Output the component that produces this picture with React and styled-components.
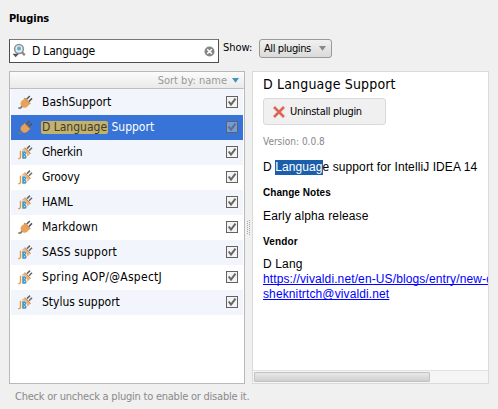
import React from "react";
import styled, { createGlobalStyle } from "styled-components";

const Global = createGlobalStyle`
  * { box-sizing: border-box; }
  body {
    margin: 0;
    background: #f0f0f0;
    color: #000;
    font-family: "DejaVu Sans Condensed", "DejaVu Sans", sans-serif;
    font-stretch: condensed;
    font-size: 12px;
    overflow: hidden;
  }
`;

const Window = styled.div`
  width: 498px;
  height: 409px;
  padding: 10px 9px 0;
  background: #f0f0f0;
`;

const Heading = styled.h1`
  margin: 0;
  height: 16px;
  font-size: 11px;
  line-height: 18px;
  font-weight: bold;
  letter-spacing: ${(p) => p.$track || 0}px;
`;

const Label = styled.span`
  white-space: pre;
  font-size: ${(p) => p.$size || 12}px;
  letter-spacing: ${(p) => p.$track || 0}px;
  color: ${(p) => p.$color || "inherit"};
`;

const Toolbar = styled.div`
  display: flex;
  height: 24px;
  margin-top: 13px;
`;

const SearchField = styled.div`
  display: flex;
  align-items: center;
  width: 210px;
  height: 24px;
  padding: 0 3px 0 2px;
  background: #fff;
  border: 1px solid #4e4e4e;
  border-top-color: #777;
`;

const SearchText = styled.div`
  flex: 1;
  margin-left: 5px;
  line-height: 22px;
`;

const ShowLabel = styled.div`
  width: 40px;
  margin-left: 4px;
  line-height: 17px;
`;

const Dropdown = styled.div`
  display: flex;
  align-items: center;
  justify-content: space-between;
  width: 73px;
  height: 19px;
  margin-left: -4px;
  padding: 0 5px 0 4px;
  border: 1px solid #999;
  border-radius: 3px;
  background: linear-gradient(#f1f1f1, #dadada);
`;

const Panels = styled.div`
  display: flex;
  height: 313px;
  margin-top: 8px;
`;

const PluginList = styled.div`
  width: 236px;
  height: 313px;
  background: #fff;
  border: 1px solid #b9b9b9;
`;

const SortHeader = styled.div`
  display: flex;
  align-items: center;
  justify-content: flex-end;
  gap: 5px;
  height: 17px;
  padding-right: 5px;
  border-bottom: 1px solid #bfbfbf;
  background: linear-gradient(#fbfbfb, #eaeaea);
`;

const Rows = styled.div`
  padding: 0 1px;
`;

const Row = styled.div`
  display: flex;
  height: ${(p) => (p.$first ? 26 : 25)}px;
  padding: ${(p) => (p.$first ? 6 : 5)}px 5px 0 7px;
  color: ${(p) => (p.$selected ? "#fff" : "#000")};
  background: ${(p) => (p.$selected ? "#3874d8" : p.$striped ? "#f2f5fb" : "#fff")};
`;

const RowName = styled.div`
  flex: 1;
  margin-left: 9px;
  line-height: 14px;
  height: 14px;
  white-space: pre;
  letter-spacing: ${(p) => p.$track || 0}px;
`;

const Match = styled.span`
  display: inline-block;
  height: 13px;
  line-height: 13px;
  margin-left: -1px;
  padding: 0 1px;
  border-radius: 2px;
  color: #3c3c30;
  background: #c3b16c;
`;

const Divider = styled.div`
  display: flex;
  align-items: center;
  justify-content: center;
  width: 7px;
`;

const Details = styled.div`
  display: flex;
  flex-direction: column;
  width: 237px;
  height: 313px;
  border: 1px solid #dadada;
  background: #fff;
`;

const DetailsBody = styled.div`
  flex: 1;
  padding: 0 0 0 10px;
  overflow: hidden;
`;

const Title = styled.h2`
  margin: 3px 0 0;
  height: 19px;
  line-height: 19px;
  font-size: 14px;
  font-weight: normal;
  white-space: pre;
  letter-spacing: ${(p) => p.$track || 0}px;
`;

const UninstallButton = styled.div`
  display: flex;
  align-items: center;
  gap: 5px;
  width: 123px;
  height: 27px;
  margin-top: 4px;
  padding: 0 0 0 9px;
  border: 1px solid #d9d9d9;
  border-radius: 3px;
  background: #f0f0f0;
`;

const Line = styled.div`
  height: 15px;
  margin-top: ${(p) => p.$gap || 0}px;
  line-height: 15px;
  font-family: ${(p) => (p.$ui ? '"DejaVu Sans Condensed", "DejaVu Sans"' : '"Liberation Sans", Arial')}, sans-serif;
  font-size: ${(p) => p.$size || 12}px;
  font-weight: ${(p) => (p.$bold ? "bold" : "normal")};
  color: ${(p) => p.$color || "#000"};
  white-space: pre;
  letter-spacing: ${(p) => p.$track || 0}px;
`;

const Selection = styled.span`
  display: inline-block;
  height: 15px;
  color: #fff;
  background: #1b5eab;
`;

const Link = styled.span`
  color: #00f;
  text-decoration: underline;
  text-decoration-skip-ink: none;
  text-decoration-thickness: 1px;
  text-underline-offset: 1px;
`;

const ScrollTrack = styled.div`
  height: 13px;
  padding: 1px;
  border-top: 1px solid #e2e2e2;
  background: #f5f5f5;
`;

const ScrollThumb = styled.div`
  width: 176px;
  height: 10px;
  border: 1px solid #c2c2c2;
  border-radius: 1px;
  background: linear-gradient(#e9e9e9, #cfcfcf);
`;

const Hint = styled.div`
  margin: 4px 0 0 6px;
  line-height: 16px;
`;

const Icon = styled.svg`
  display: block;
  flex: none;
`;

function SearchIcon() {
  return (
    <Icon width="15" height="16" viewBox="0 0 15 16">
      <circle cx="7" cy="6" r="4.4" fill="#d9edf7" stroke="#8f8f8f" strokeWidth="1.5" />
      <circle cx="7" cy="5.6" r="2" fill="#64a9ca" />
      <path d="M10 9.2 12.8 12.3" stroke="#888" strokeWidth="2.3" />
      <path d="M.5 10.8h6.4l-3.2 3.4z" fill="#555" />
    </Icon>
  );
}

function ClearIcon() {
  return (
    <Icon width="11" height="11" viewBox="0 0 11 11">
      <circle cx="5.5" cy="5.5" r="5" fill="#858585" />
      <path d="M3.2 3.2 7.8 7.8M7.8 3.2 3.2 7.8" stroke="#fff" strokeWidth="1.6" />
    </Icon>
  );
}

function Triangle({ color }) {
  return (
    <Icon width="7" height="5" viewBox="0 0 7 5">
      <path d="M0 0h7L3.5 4.7z" fill={color} />
    </Icon>
  );
}

function PlugIcon({ bundled }) {
  return bundled ? (
    <Icon width="15" height="15" viewBox="0 0 15 15">
      <path d="M9 3.6 12 .6M11 5.8 14 2.8" stroke="#666" strokeWidth="1.5" />
      <path d="M3.3 5.2 6.9 2.6 12.6 8.6 9.5 11.5 7.5 6z" fill="#e9b37c" />
      <path d="m7 2.6 5.6 6" stroke="#b98350" strokeWidth="1" />
      <path d="M2.5 5.8v6q0 2-2.3 1.8" fill="none" stroke="#e69a3e" strokeWidth="1.4" />
      <path d="M4.2 6.2h2.4q1.6 0 1.6 1.9t-1.1 1.8q1.5.1 1.5 2t-1.9 1.9H4.2z" fill="#4b9ac2" />
      <path d="M6 7.9h.5v1.2H6zM6 10.9h.7v1.2H6z" fill="#fff" />
    </Icon>
  ) : (
    <Icon width="15" height="15" viewBox="0 0 15 15">
      <path d="M8.6 4.2 11.8 1M10.8 6.6 14 3.4" stroke="#555" strokeWidth="1.5" />
      <path d="M6.3 2.8 12.3 9 10.8 9.9C9.6 12 7 13.6 4.8 12.2L3 10.4C1.8 8.2 3.2 5.6 5.6 4.6z" fill="#e8a157" />
      <path d="m6.3 2.8 6 6" stroke="#b8712c" strokeWidth="1" />
      <path d="M4 11.3 2.6 12.9.4 13.2" fill="none" stroke="#777" strokeWidth="1.7" />
    </Icon>
  );
}

function CheckIcon({ selected }) {
  return (
    <Icon width="12" height="12" viewBox="0 0 12 12">
      <rect x=".5" y=".5" width="11" height="11" fill={selected ? "#6f9be0" : "#f3f3f3"} stroke="#626262" />
      <path d="M2.7 5.5 5 8.5 9.5 2.6" fill="none" stroke={selected ? "#666b75" : "#666"} strokeWidth="2" />
    </Icon>
  );
}

const CheckCell = styled.div`
  padding-top: 1px;
`;

function RemoveIcon() {
  return (
    <Icon width="12" height="12" viewBox="0 0 12 12">
      <path d="M1 1 11 11M11 1 1 11" stroke="#db6656" strokeWidth="2.6" />
    </Icon>
  );
}

function GripIcon() {
  return (
    <Icon width="5" height="15" viewBox="0 0 5 15">
      <path d="M1.5 1v14M3.5 0v15" stroke="#a8a8a8" strokeWidth="1" strokeDasharray="1 1" />
    </Icon>
  );
}

const plugins = [
  { name: "BashSupport" },
  { name: "D Language Support", match: "D Language", selected: true },
  { name: "Gherkin", bundled: true, track: -0.3 },
  { name: "Groovy", bundled: true, track: -0.15 },
  { name: "HAML", bundled: true },
  { name: "Markdown" },
  { name: "SASS support", bundled: true, track: 0.15 },
  { name: "Spring AOP/@AspectJ", bundled: true, track: 0.28 },
  { name: "Stylus support", bundled: true },
];

export default function App() {
  return (
    <>
      <Global />
      <Window>
        <Heading $track={-0.15}>Plugins</Heading>
        <Toolbar>
          <SearchField>
            <SearchIcon />
            <SearchText><Label $track={-0.2}>D Language</Label></SearchText>
            <ClearIcon />
          </SearchField>
          <ShowLabel><Label $size={11}>Show:</Label></ShowLabel>
          <Dropdown>
            <Label $size={11} $track={-0.4}>All plugins</Label>
            <Triangle color="#888" />
          </Dropdown>
        </Toolbar>
        <Panels>
          <PluginList>
            <SortHeader>
              <Label $size={11} $color="#999">Sort by: name</Label>
              <Triangle color="#4193bd" />
            </SortHeader>
            <Rows>
              {plugins.map((p, i) => (
                <Row key={p.name} $first={i === 0} $striped={i % 2 === 0} $selected={p.selected}>
                  <PlugIcon bundled={p.bundled} />
                  <RowName $track={p.track}>
                    {p.match && <Match>{p.match}</Match>}
                    {p.match ? p.name.slice(p.match.length) : p.name}
                  </RowName>
                  <CheckCell><CheckIcon selected={p.selected} /></CheckCell>
                </Row>
              ))}
            </Rows>
          </PluginList>
          <Divider><GripIcon /></Divider>
          <Details>
            <DetailsBody>
              <Title $track={0.17}>D Language Support</Title>
              <UninstallButton>
                <RemoveIcon />
                <Label $size={11} $track={-0.32}>Uninstall plugin</Label>
              </UninstallButton>
              <Line $ui $size={10} $color="#888" $gap={9}>Version: 0.0.8</Line>
              <Line $gap={11} $track={0.09}>D <Selection>Languag</Selection>e support for IntelliJ IDEA 14</Line>
              <Line $bold $size={10} $gap={10} $track={0.05}>Change Notes</Line>
              <Line $gap={9} $track={0.15}>Early alpha release</Line>
              <Line $bold $size={10} $gap={10} $track={0.15}>Vendor</Line>
              <Line $gap={8} $track={0.15}>D Lang</Line>
              <Line $track={0.12}><Link>https://vivaldi.net/en-US/blogs/entry/new-d</Link></Line>
              <Line $track={0.12}><Link>sheknitrtch@vivaldi.net</Link></Line>
            </DetailsBody>
            <ScrollTrack><ScrollThumb /></ScrollTrack>
          </Details>
        </Panels>
        <Hint><Label $size={11} $track={-0.23} $color="#8a8a8a">Check or uncheck a plugin to enable or disable it.</Label></Hint>
      </Window>
    </>
  );
}
